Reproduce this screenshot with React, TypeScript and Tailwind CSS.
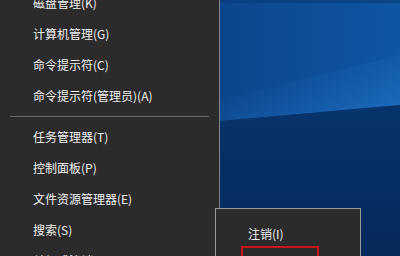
import React from "react";

const font = { fontFamily: '"Noto Sans CJK SC", "Noto Sans", sans-serif' };

function Row({ label }: { label: string }) {
  return (
    <div className="h-[31px] shrink-0 flex items-center pl-[33px] text-[12px] text-[#f0f0f0] whitespace-nowrap leading-none">
      {label}
    </div>
  );
}

export default function App() {
  return (
    <div className="relative w-[400px] h-[256px] overflow-hidden flex bg-[#0b3f7c]" style={font}>
      <div className="w-[220px] h-full shrink-0 bg-[#2b2b2b] border-r border-[#7d848c] flex flex-col overflow-hidden">
        <div className="mt-[-12.5px] shrink-0 flex flex-col">
          <Row label="磁盘管理(K)" />
          <Row label="计算机管理(G)" />
          <Row label="命令提示符(C)" />
          <Row label="命令提示符(管理员)(A)" />
        </div>
        <div className="h-[10px] shrink-0 flex items-start pt-[4px] px-[10px]">
          <div className="h-px w-full bg-[#6b6b6b]" />
        </div>
        <div className="shrink-0 flex flex-col">
          <Row label="任务管理器(T)" />
          <Row label="控制面板(P)" />
          <Row label="文件资源管理器(E)" />
          <Row label="搜索(S)" />
          <Row label="关机或注销(U)" />
        </div>
      </div>
      <div className="flex-1 h-full">
        <svg width="180" height="256" viewBox="0 0 180 256" className="block">
          <defs>
            <linearGradient id="top" x1="0" y1="0" x2="1" y2="0">
              <stop offset="0" stopColor="#0b468b" />
              <stop offset="1" stopColor="#0f56a3" />
            </linearGradient>
            <linearGradient id="bot" x1="0" y1="0" x2="0" y2="1">
              <stop offset="0" stopColor="#07336c" />
              <stop offset="1" stopColor="#052a5a" />
            </linearGradient>
            <linearGradient id="glow" x1="0" y1="0" x2="1" y2="1">
              <stop offset="0.3" stopColor="#2578cf" stopOpacity="0" />
              <stop offset="1" stopColor="#2a7fd6" stopOpacity="0.55" />
            </linearGradient>
          </defs>
          <polygon points="0,0 180,0 180,105 0,121" fill="url(#top)" />
          <polygon points="0,100 180,55 180,105 0,121" fill="url(#glow)" />
          <polygon points="0,121 180,105 180,256 0,256" fill="url(#bot)" />
          <rect x="0" y="0" width="180" height="3" fill="#093a74" opacity="0.6" />
        </svg>
      </div>
      <div className="absolute left-[215px] top-[208px] w-[146px] h-[60px] bg-[#2b2b2b] border border-[#9a9a9a]">
        <div className="pl-[32px] pt-[19px] text-[12px] text-[#f0f0f0] leading-none whitespace-nowrap">注销(I)</div>
      </div>
      <div className="absolute left-[241px] top-[246px] w-[78px] h-[20px] border-2 border-[#c8161d]" />
    </div>
  );
}
